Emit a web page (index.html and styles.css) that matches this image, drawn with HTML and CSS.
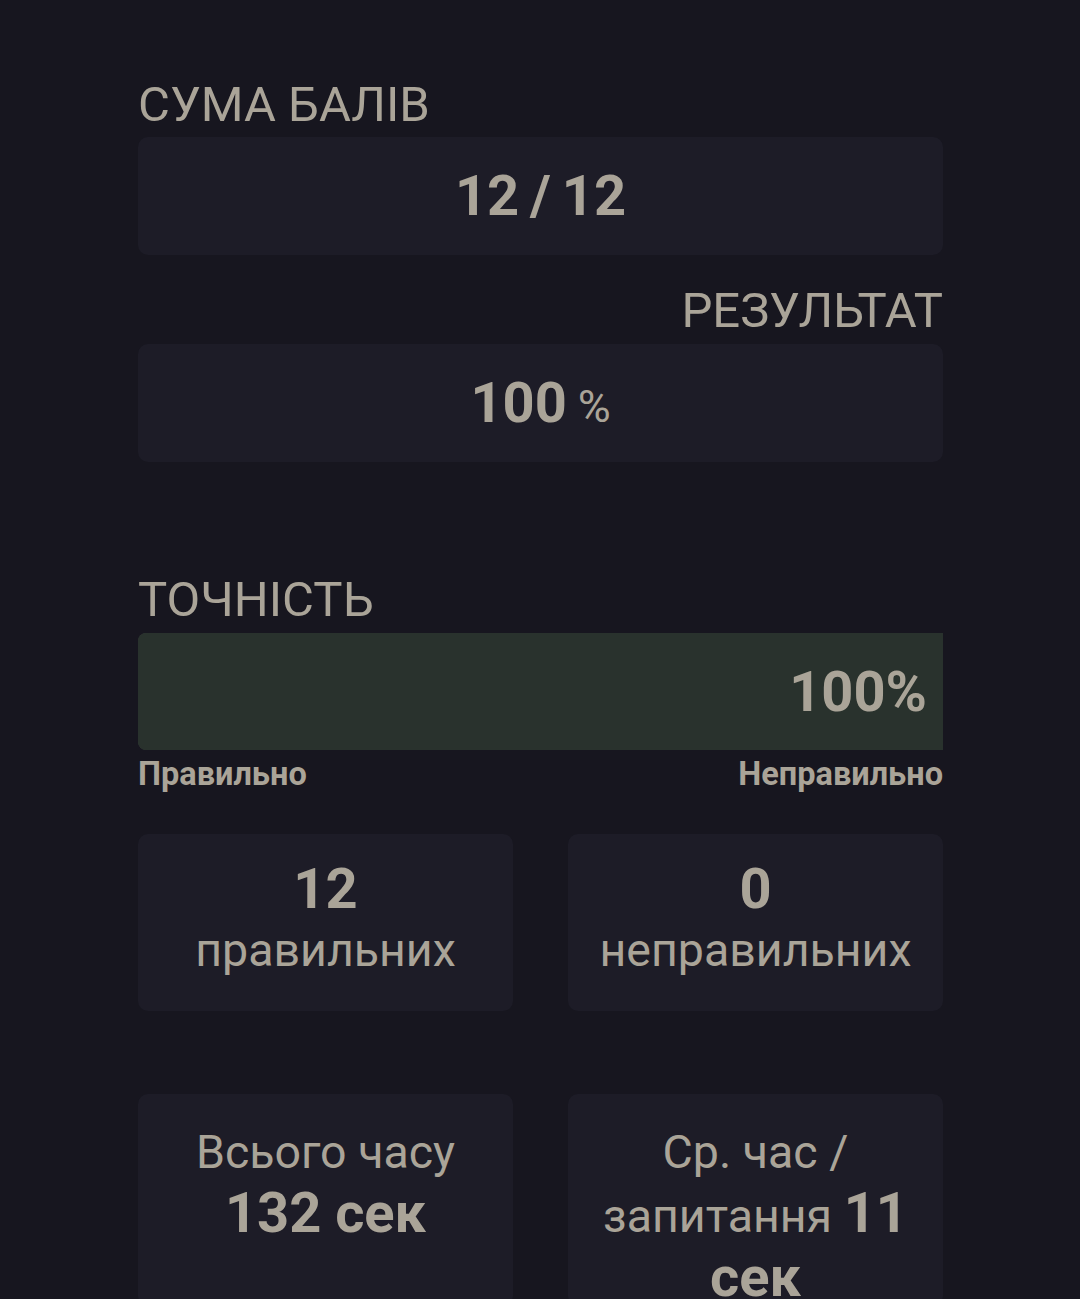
FILE: index.html
```html
<html>
    <head>
        <meta charset="UTF-8">
        <title>Результати тесту</title>
        <link rel="stylesheet" href="styles.css">
    </head>
    <body>
        <div id="results">
            <div class="label">СУМА БАЛІВ</div>
            <div class="panel"><b>12 / 12</b></div>

            <div class="label label-right">РЕЗУЛЬТАТ</div>
            <div class="panel"><b>100</b>&nbsp;<span class="unit">%</span></div>

            <div class="label accuracy-label">ТОЧНІСТЬ</div>
            <div class="bar">
                <div class="bar-fill" style="width:100%">100%</div>
            </div>
            <div class="bar-legend">
                <span>Правильно</span>
                <span>Неправильно</span>
            </div>

            <div class="tiles">
                <div class="tile"><b>12</b><br>правильних</div>
                <div class="tile"><b>0</b><br>неправильних</div>
            </div>

            <div class="tiles tiles-time">
                <div class="tile">Всього часу<br><b>132 сек</b></div>
                <div class="tile">Ср. час / запитання <b>11 сек</b></div>
            </div>
        </div>
    </body>
</html>
```

FILE: styles.css
```css
/* dark theme
  page   : #17161f
  panels : #1d1c27
  text   : #aaa498
*/
html{
  background:#17161f;
}
body {
    margin:0;
    font-family: Roboto, 'Noto Sans', sans-serif;
    color:#aaa498;
}

#results{
  width:805px;
  margin-left:138px;
  padding-top:77px;
}

.label{
  font-size:49px;
  line-height:56px;
  margin-bottom:4px;
}
.label-right{
  text-align:right;
  margin-top:28px;
  margin-bottom:5px;
}
.accuracy-label{
  margin-top:110px;
  margin-bottom:5px;
}

.panel{
  background:#1d1c27;
  border-radius:10px;
  height:118px;
  display:flex;
  align-items:center;
  justify-content:center;
  font-size:56px;
  word-spacing:-3px;
}
.panel b{
  font-weight:700;
}
.unit{
  font-size:45px;
  padding-top:6px;
}

.bar{
  height:117px;
  background:#343d37;
  border-radius:8px 0 0 8px;
  overflow:hidden;
}
.bar-fill{
  height:100%;
  box-sizing:border-box;
  width:calc(100% - 2px);
  background:#29322d;
  border-radius:8px 0 0 8px;
  display:flex;
  align-items:center;
  justify-content:flex-end;
  padding-right:16px;
  font-size:56px;
  font-weight:700;
}

.bar-legend{
  display:flex;
  justify-content:space-between;
  font-size:32.5px;
  font-weight:700;
  line-height:40px;
  margin-top:4px;
}

.tiles{
  display:grid;
  grid-template-columns:1fr 1fr;
  gap:55px;
  margin-top:40px;
}
.tiles-time{
  margin-top:83px;
}
.tile{
  background:#1d1c27;
  border-radius:10px;
  min-height:177px;
  box-sizing:border-box;
  padding:26px 20px 0;
  text-align:center;
  font-size:46.5px;
  line-height:64px;
}
.tile b{
  font-size:56px;
  line-height:58px;
}
.tiles-time .tile{
  padding-top:26px;
}
```
